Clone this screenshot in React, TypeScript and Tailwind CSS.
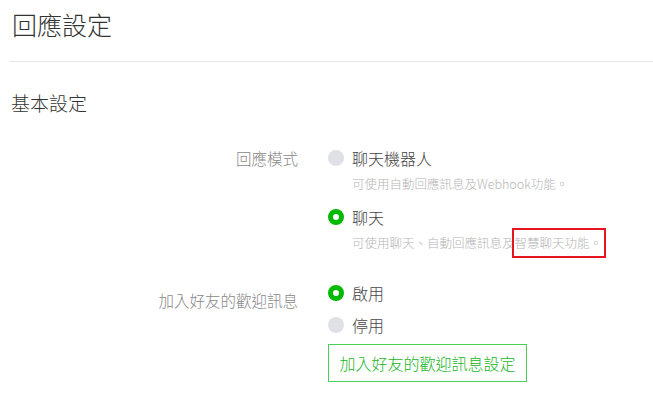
import React from "react";

function Radio({ checked }: { checked?: boolean }) {
  return checked ? (
    <span className="block w-4 h-4 rounded-full border-[5px] border-[#00b900] bg-white shrink-0" />
  ) : (
    <span className="block w-4 h-4 rounded-full bg-[#dfe1e6] shrink-0" />
  );
}

function Option({ checked, label }: { checked?: boolean; label: string }) {
  return (
    <div className="flex items-center gap-[8px] h-[24px]">
      <Radio checked={checked} />
      <span className="text-[16px] leading-[24px] text-[#444]">{label}</span>
    </div>
  );
}

export default function App() {
  return (
    <div className="w-[653px] h-[408px] bg-white overflow-hidden pl-[10px] font-light font-['Noto_Sans_CJK_TC','Noto_Sans_CJK_JP',sans-serif]">
      <h1 className="text-[25px] leading-[38px] pt-[5px] pl-[2px] text-[#333] font-light">回應設定</h1>
      <div className="mt-[18px] h-px bg-[#e6e6e6]" />
      <h2 className="mt-[26px] text-[19px] leading-[30px] pl-[1px] text-[#333] font-light">基本設定</h2>

      <div className="mt-[28px] grid grid-cols-[288px_1fr] gap-x-[30px]">
        <div className="text-right text-[15.5px] leading-[24px] text-[#888]">回應模式</div>
        <div>
          <Option label="聊天機器人" />
          <div className="mt-[4px] pl-[24px] text-[12.5px] leading-[20px] text-[#b5b5b5]">
            可使用自動回應訊息及Webhook功能。
          </div>
          <div className="mt-[11px]">
            <Option checked label="聊天" />
          </div>
          <div className="mt-[4px] pl-[24px] text-[12.5px] leading-[20px] text-[#b5b5b5]">
            可使用聊天、自動回應訊息及
            <span className="relative inline-block">
              智慧聊天功能。
              <span className="absolute -left-[3px] -right-[4px] -top-[5px] -bottom-[5px] border-2 border-[#e5141f]" />
            </span>
          </div>
        </div>

        <div className="mt-[28px] pt-[7px] text-right text-[15.5px] leading-[24px] text-[#888]">加入好友的歡迎訊息</div>
        <div className="mt-[28px]">
          <Option checked label="啟用" />
          <div className="mt-[8px]">
            <Option label="停用" />
          </div>
          <div className="mt-[7px] w-[199px] h-[38px] border border-[#4ccf56] flex items-center justify-center text-[16px] text-[#19b526]">
            加入好友的歡迎訊息設定
          </div>
        </div>
      </div>
    </div>
  );
}
